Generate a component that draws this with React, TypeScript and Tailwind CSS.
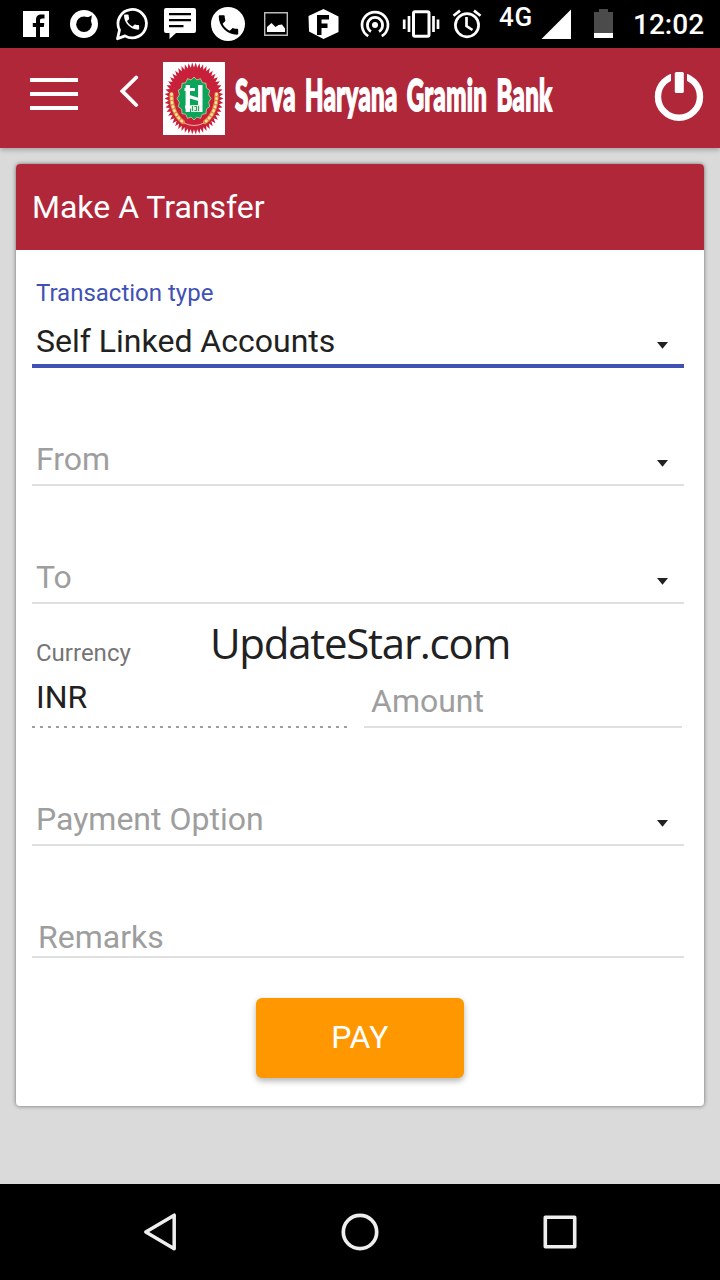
import type { ReactNode } from "react";

function Slot({ children, narrow = false }: { children: ReactNode; narrow?: boolean }) {
  return <div className={narrow ? "h-12 w-[46px] shrink-0" : "h-12 w-12 shrink-0"}>{children}</div>;
}

const handset =
  "M6.6 10.8c1.4 2.8 3.8 5.1 6.6 6.6l2.2-2.2c.3-.3.7-.4 1-.2 1.1.4 2.3.6 3.6.6.6 0 1 .4 1 1V20c0 .6-.4 1-1 1C10.6 21 3 13.400 3 4c0-.6.4-1 1-1h3.500c.6 0 1 .4 1 1 0 1.300.2 2.500.6 3.600.1.300 0 .7-.2 1z";

function StatusBar() {
  return (
    <div className="flex h-12 bg-black pl-3 text-white">
      <Slot>
        <svg viewBox="0 0 48 48" className="size-12">
          <path d="M11 11h26v26H11z" fill="#fff" />
          <path d="M24 37V27h-3.200v-4H24v-3.200c0-3.600 2-5.300 5.300-5.300H32.500v4h-2.300c-1.500 0-2.200.7-2.200 2V23h4.300l-.5 4H28v10z" fill="#000" />
        </svg>
      </Slot>
      <Slot>
        <svg viewBox="0 0 48 48" className="size-12">
          <circle cx="24" cy="24" r="14" fill="#fff" />
          <circle cx="24" cy="24.200" r="7.800" fill="#000" />
          <path d="M25 17.500c2.500 0 4.500-.6 6.800-2.200-.2 3-.6 4.600-1.200 7.200z" fill="#000" />
        </svg>
      </Slot>
      <Slot>
        <svg viewBox="0 0 48 48" className="size-12">
          <path d="M17 35.900A14.200 14.200 0 1 0 11.500 30L9.500 38.800z" fill="none" stroke="#fff" strokeWidth="2.800" strokeLinejoin="round" />
          <path d={handset} fill="#fff" transform="translate(13.500 12) scale(.84)" />
        </svg>
      </Slot>
      <Slot>
        <svg viewBox="0 0 48 48" className="size-12">
          <path d="M10 8h28a2 2 0 0 1 2 2v21a2 2 0 0 1-2 2H20l-6.500 6v-6H10a2 2 0 0 1-2-2V10a2 2 0 0 1 2-2z" fill="#fff" />
          <path d="M13 14.200h22M13 20.200h22M13 26.200h14.500" stroke="#000" strokeWidth="2.200" />
        </svg>
      </Slot>
      <Slot>
        <svg viewBox="0 0 48 48" className="size-12">
          <circle cx="24" cy="24" r="17" fill="#fff" />
          <path d={handset} fill="#000" transform="translate(11.500 12) scale(1.080)" />
        </svg>
      </Slot>
      <Slot>
        <svg viewBox="0 0 48 48" className="size-12">
          <path d="M12.700 12.700h22.600v22.600H12.700z" fill="none" stroke="#bbb" strokeWidth="1.400" />
          <path d="M15 32v-5l4.500-4 4 4 3-2 3.500-.5 3 4V32z" fill="#fff" />
        </svg>
      </Slot>
      <Slot>
        <svg viewBox="0 0 48 48" className="size-12">
          <path d="M23.500 9 38.500 16.500 38.500 32 23.500 39 9 31.500 8.500 16z" fill="#fff" />
          <path d="M17 15h12v4.500h-7.500v4h6V28h-6v7H17z" fill="#000" />
        </svg>
      </Slot>
      <div className="w-1" />
      <Slot narrow>
        <svg viewBox="0 0 46 48" className="h-12 w-[46px]" fill="none" stroke="#fff" strokeWidth="2.700">
          <circle cx="23" cy="25" r="3" fill="#fff" stroke="none" />
          <path d="M16.200 36.200a13 13 0 1 1 13.600 0M19 31.500a7.600 7.600 0 1 1 8 0" />
        </svg>
      </Slot>
      <Slot narrow>
        <svg viewBox="0 0 46 48" className="h-12 w-[46px]" fill="none" stroke="#fff">
          <rect x="15.500" y="11.800" width="15.500" height="24.500" rx="1.500" strokeWidth="3" />
          <path d="M11 16v16M35.500 16v16M6.200 19.500v9.500M40 19.500v9.500" strokeWidth="2.700" />
        </svg>
      </Slot>
      <Slot narrow>
        <svg viewBox="0 0 46 48" className="h-12 w-[46px]" fill="none" stroke="#fff" strokeWidth="2.700">
          <circle cx="23" cy="25.200" r="11.600" />
          <path d="M22.500 17v9l6 4M9.500 15.800l6.500-5.200M36.500 15.800 30 10.600" />
        </svg>
      </Slot>
      <span className="ml-[9px] mt-[5px] w-[42px] font-[Roboto] text-[26px] font-medium leading-6 tracking-[0.030em]">4G</span>
      <svg viewBox="0 0 30 48" className="h-12 w-[30px] shrink-0">
        <path d="M30 9.500V39H.5z" fill="#fff" />
      </svg>
      <svg viewBox="0 0 20 48" className="ml-[23px] h-12 w-5 shrink-0">
        <path d="M0 12h5V9h9v3h5v22H0z" fill="#4b4b4b" />
        <path d="M0 33h19v5H0z" fill="#fff" />
      </svg>
      <span className="ml-[19px] mt-[9px] font-[Roboto] text-[28px] font-medium leading-8">12:02</span>
    </div>
  );
}

function ring(n: number, rx: number, ry: number, depth: number) {
  return Array.from({ length: n * 2 }, (_, i) => {
    const a = (i * Math.PI) / n;
    const k = i % 2 ? depth : 1;
    return `${(31 + rx * k * Math.cos(a)).toFixed(2)},${(36.500 + ry * k * Math.sin(a)).toFixed(2)}`;
  }).join(" ");
}

function Ear() {
  return (
    <g fill="none" strokeLinecap="round">
      <path d="M8.500 32C8 43 12 54 20 60" stroke="#e08a3c" strokeWidth="4.200" />
      <path d="M8.500 32C8 43 12 54 20 60" stroke="#f9e3a8" strokeWidth="2.600" strokeDasharray=".6 3.600" />
    </g>
  );
}

function Emblem() {
  return (
    <svg viewBox="0 0 62 73" className="mt-[14px] h-[73px] w-[62px] shrink-0">
      <path d="M0 0h62v73H0z" fill="#fff" />
      <polygon points={ring(50, 29.5, 36, 0.86)} fill="#c8203a" />
      <Ear />
      <g transform="translate(62 0) scale(-1 1)">
        <Ear />
      </g>
      <path d="M21 61q10 5 20 0" fill="none" stroke="#efb79a" strokeWidth="1" />
      <polygon points={ring(16, 17, 21.500, 0.88)} fill="#0aa45a" stroke="#e8d9a0" strokeWidth=".7" />
      <path d="M24.800 23v27M37.300 23v27" stroke="#fff" strokeWidth="4.400" />
      <path d="M21.500 27.500H32M26 34.500l13 4M22 45h6" stroke="#fff" strokeWidth="3.200" />
      <path d="M28 43h9v7h-9z" fill="#d9f0dd" />
      <path d="M29.500 44v5M31.500 44.500h2v4h-2M35.500 44v5" fill="none" stroke="#16804a" strokeWidth=".8" />
    </svg>
  );
}

function AppBar() {
  return (
    <header className="relative flex h-[100px] bg-[#b1273a] shadow-[0_2px_5px_rgba(0,0,0,0.25)]">
      <div className="ml-[30px] mt-[30px] flex h-8 w-12 flex-col justify-between">
        <div className="h-1 bg-white" />
        <div className="h-1 bg-white" />
        <div className="h-1 bg-white" />
      </div>
      <svg viewBox="0 0 20 34" className="ml-[42px] mt-[26px] h-[34px] w-5" fill="none" stroke="#fff" strokeWidth="3.800" strokeLinecap="round">
        <path d="M16.200 3.500 2.300 17.200 16.200 31" />
      </svg>
      <div className="w-[23px]" />
      <Emblem />
      <div className="ml-[10px] mt-4 w-[330px]">
        <span className="inline-block origin-left scale-x-[0.545] whitespace-nowrap font-[Lato,sans-serif] text-[44px] font-black leading-[60px] tracking-[0.6px] text-white [-webkit-text-stroke:1.800px_white] [word-spacing:6px]">
          Sarva Haryana Gramin Bank
        </span>
      </div>
      <svg viewBox="0 0 50 52" className="ml-auto mr-4 mt-[23px] h-[52px] w-[50px]" fill="none">
        <circle cx="25" cy="25.700" r="21" stroke="#fff" strokeWidth="6.400" />
        <path d="M17 0h16v14H17z" fill="#b1273a" />
        <rect x="20.800" y="1" width="9" height="21" rx="1.500" fill="#fff" />
      </svg>
    </header>
  );
}

function Caret() {
  return (
    <svg viewBox="0 0 12 7" className="mb-3 mr-[15px] h-[7px] w-3">
      <path d="M0 0h11L5.500 6.800z" fill="#212121" />
    </svg>
  );
}

function EmptyField({ label, caret = true }: { label: string; caret?: boolean }) {
  return (
    <div className="flex h-[118px] items-end justify-between border-b-2 border-[#e0e0e0] pb-[5px] pl-1 text-[#9e9e9e]">
      <span className="leading-10">{label}</span>
      {caret && <Caret />}
    </div>
  );
}

export default function App() {
  return (
    <div className="flex h-[1280px] w-[720px] flex-col overflow-hidden bg-[#dadada] font-[Roboto,sans-serif]">
      <StatusBar />
      <AppBar />
      <main className="flex-1 px-4 pt-4">
        <section className="h-[942px] rounded bg-white text-[32px] shadow-[0_0_4px_rgba(0,0,0,0.5)]">
          <h1 className="h-[86px] rounded-t bg-[#b1273a] pl-4 pt-[23px] leading-10 text-white">Make A Transfer</h1>
          <div className="px-4">
            <div className="mr-1 flex h-[118px] flex-col justify-end border-b-4 border-[#3f51b5] pb-[3px] pl-1">
              <span className="mb-[14px] text-2xl leading-7 text-[#3f51b5]">Transaction type</span>
              <div className="flex items-end justify-between text-[#212121]">
                <span className="leading-10">Self Linked Accounts</span>
                <Caret />
              </div>
            </div>
            <div className="mr-1">
              <EmptyField label="From" />
              <EmptyField label="To" />
            </div>
            <div className="relative flex h-[124px]">
              <div className="flex w-[316px] flex-col justify-end">
                <div className="pb-[9px] pl-1">
                  <div className="mb-[10px] text-2xl leading-7 text-[#757575]">Currency</div>
                  <div className="leading-10 text-[#212121]">INR</div>
                </div>
                <div className="h-[2px] bg-[repeating-linear-gradient(to_right,#9e9e9e_0px,#9e9e9e_3px,transparent_3px,transparent_8px)]" />
              </div>
              <div className="ml-4 flex w-[318px] items-end border-b-2 border-[#e0e0e0] pb-[5px] pl-[7px] text-[#9e9e9e]">
                <span className="leading-10">Amount</span>
              </div>
              <span className="absolute left-[178px] top-[9px] font-['Open_Sans',sans-serif] text-[42px] leading-[60px] tracking-[-0.030em] text-[#212121]">UpdateStar.com</span>
            </div>
            <div className="mr-1">
              <EmptyField label="Payment Option" />
              <div className="flex h-28 items-end border-b-2 border-[#e0e0e0] pb-px pl-1.5 text-[#9e9e9e]">
                <span className="leading-9">Remarks</span>
              </div>
            </div>
            <button className="mx-auto mt-10 block h-20 w-52 rounded-md bg-[#ff9800] pb-0.5 leading-10 tracking-[0.010em] text-white shadow-[0_3px_6px_rgba(0,0,0,0.3)]">PAY</button>
          </div>
        </section>
      </main>
      <nav className="flex h-24 justify-center gap-[152px] bg-black">
        <svg viewBox="0 0 48 96" className="h-24 w-12" fill="none" stroke="#eee" strokeWidth="3.500" strokeLinejoin="round">
          <path d="M38.200 31.200v33.600L9.800 48z" />
        </svg>
        <svg viewBox="0 0 48 96" className="h-24 w-12" fill="none" stroke="#eee" strokeWidth="3.700">
          <circle cx="24" cy="48" r="16.700" />
        </svg>
        <svg viewBox="0 0 48 96" className="h-24 w-12" fill="none" stroke="#eee" strokeWidth="3.600" strokeLinejoin="round">
          <path d="M9.300 33.300h29.400v29.400H9.300z" />
        </svg>
      </nav>
    </div>
  );
}
